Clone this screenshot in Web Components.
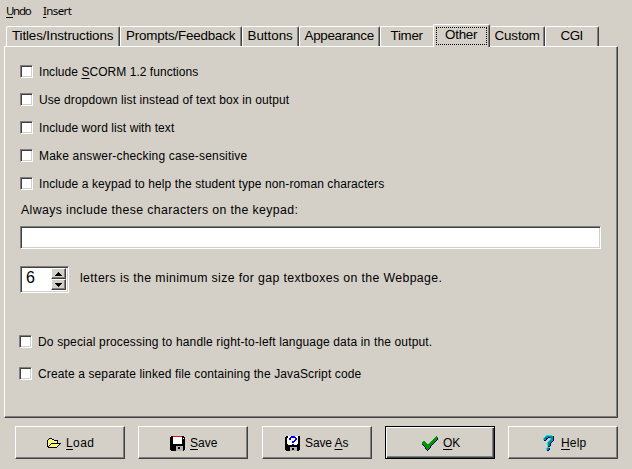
<!DOCTYPE html>
<html lang="en">
<head>
<meta charset="utf-8">
<title>Configure Output</title>
<style>
html,body{margin:0;height:100%;background:#d4d0c8;overflow:hidden}
body{font-family:"Liberation Sans",Arial,sans-serif;font-size:12px;color:#000}
</style>
</head>
<body>
<config-window></config-window>
<script>
// Text stretched by letter spacing to a given width; "_" marks the accelerator key.
customElements.define('fit-text', class extends HTMLElement {
  connectedCallback() {
    const root = this.attachShadow({mode: 'open'});
    const html = this.getAttribute('text').replace(/_(.)/, '<u>$1</u>');
    root.innerHTML = `<style>:host{display:block;white-space:nowrap;line-height:16px;height:16px}
      u{text-decoration:underline;text-decoration-thickness:1px;text-underline-offset:2px}</style><span>${html}</span>`;
    const span = root.querySelector('span'), w = +this.getAttribute('w');
    if (w) {
      const n = span.textContent.length;
      span.style.letterSpacing = (w + .3 - span.getBoundingClientRect().width) / n + 'px';
      this.style.width = w + 1 + 'px';
    }
  }
});

const ICONS = {
  folder: [
    '..kkk.........',
    '.kywykk.......',
    'kywywywkkkk...',
    'kwywywywywk...',
    'kywywywywyk...',
    'kwywkkkkkkkkkk',
    'kywkywywywywk.',
    'kwkywywywywk..',
    'kkywywywywk...',
    '.kkkkkkkkk....'],
  floppy: [
    '.kkrrrrrrrrrkk.',
    'kkkwwwwwwwwwkkk',
    'kkkwwwwwwwwwkwk',
    'kkkwwwwwwwwwkkk',
    'kkkwwwwwwwwwkkk',
    'kkkwwwwwwwwwkkk',
    'kkkwwwwwwwwwkkk',
    'kkkwwwwwwwwwkkk',
    'kkkkkkkkkkkkkkk',
    'kkkkkkkkkkkkkkk',
    'kkkkkkgggggggkk',
    'kkkkkkggkkgggkk',
    'kkkkkkggkkgggkk',
    'kkkkkkgggggggkk',
    '.kkkkkgggggggk.'],
  floppyAsk: [
    '.kkwwwbbbbwwwkk',
    'kkkwwbbbbbbwwkk',
    'kkwwbbwwwwbbwkk',
    'kkwwbbwwwwbbwkk',
    'kkwwwwwwwbbwwkk',
    'kkwwwwwbbbwwwkk',
    'kkwwwwwbbwwwwkk',
    'kkwwwwwwwwwwwkk',
    'kkkwwwwbbwwwkkk',
    'kkkkkkkkkkkkkkk',
    'kkkkkkkkkkkkkkk',
    'kkkkkgggggggkkk',
    'kkkkkggkkgggkkk',
    'kkkkkggkkgggkkk',
    '.kkkkgggggggkk.'],
  check: [
    '..............G.',
    '.............GGG',
    '............GGGn',
    '...........GGGGn',
    '..........GGGGn.',
    '.GG......GGGGn..',
    'GGGG....GGGGn...',
    'GGGGG..GGGGn....',
    'nGGGGGGGGGn.....',
    '.nGGGGGGGn......',
    '..nGGGGGn.......',
    '...nGGGGn.......',
    '...nGGGn........',
    '....nGn.........',
    '.....n..........'],
  help: [
    '...cccccc..',
    '..ctttttttn',
    '.ctttnntttn',
    'cttnn..cttn',
    'cttn...cttn',
    '.nn...ctttn',
    '.....ctttn.',
    '....ctttn..',
    '....cttn...',
    '....cttn...',
    '....cttn...',
    '.....nn....',
    '....cc.....',
    '...cttn....',
    '...cttn....',
    '....nn.....']
};
const INK = {k:'#000',w:'#fff',y:'#ffff00',r:'#f00',g:'#b4b4b4',b:'#0000ff',G:'#009800',n:'#000070',c:'#00e0e0',t:'#009090'};
customElements.define('pixel-icon', class extends HTMLElement {
  connectedCallback() {
    const rows = ICONS[this.getAttribute('name')];
    let rects = '';
    rows.forEach((row, y) => [...row].forEach((c, x) => {
      if (c !== '.') rects += `<rect x="${x}" y="${y}" width="1" height="1" fill="${INK[c]}"/>`;
    }));
    this.attachShadow({mode: 'open'}).innerHTML = `<style>:host{display:block;flex:none}svg{display:block}</style>
      <svg width="${rows[0].length}" height="${rows.length}" shape-rendering="crispEdges">${rects}</svg>`;
  }
});

customElements.define('menu-bar', class extends HTMLElement {
  connectedCallback() {
    this.attachShadow({mode: 'open'}).innerHTML = `<style>
      :host{display:flex;gap:12px;padding:3px 0 0 6px;height:20px;box-sizing:border-box;font-family:"Noto Sans",sans-serif;font-size:11.5px}</style>
      <fit-text text="_Undo" w="24"></fit-text><fit-text text="_Insert" w="28"></fit-text>`;
  }
});

customElements.define('tab-item', class extends HTMLElement {
  connectedCallback() {
    this.attachShadow({mode: 'open'}).innerHTML = `<style>
      :host{display:flex;justify-content:center;box-sizing:border-box;flex:none;height:20px;padding-top:1px;font-size:13.4px;
        border-top:1px solid #fff;border-left:1px solid #fff;border-right:1px solid #404040;
        box-shadow:inset -1px 0 #808080;border-radius:2px 2px 0 0;background:#d4d0c8}
      :host([selected]){height:23px;margin-bottom:-1px;padding:2px 2px 0;z-index:1}
      :host([under]){border-right:0;box-shadow:none;border-top-right-radius:0}
      div{display:flex;justify-content:center}
      :host([selected]) div{outline:1px dotted #000;outline-offset:-1px;width:100%;height:18px}
      </style><div><slot></slot></div>`;
  }
});

customElements.define('check-row', class extends HTMLElement {
  connectedCallback() {
    this.attachShadow({mode: 'open'}).innerHTML = `<style>
      :host{display:flex;align-items:flex-start;gap:6px;height:16px}
      i{width:13px;height:13px;margin-top:1px;box-sizing:border-box;background:#fff;border:1px solid;border-color:#808080 #fff #fff #808080;
        box-shadow:inset 1px 1px #404040,inset -1px -1px #d4d0c8}</style>
      <i></i><slot></slot>`;
  }
});

customElements.define('sunken-field', class extends HTMLElement {
  connectedCallback() {
    this.attachShadow({mode: 'open'}).innerHTML = `<style>
      :host{display:flex;box-sizing:border-box;background:#fff;border:1px solid;border-color:#808080 #fff #fff #808080;
        box-shadow:inset 1px 1px #404040,inset -1px -1px #d4d0c8;padding:1px}</style><slot></slot>`;
  }
});

customElements.define('spin-arrows', class extends HTMLElement {
  connectedCallback() {
    this.attachShadow({mode: 'open'}).innerHTML = `<style>
      :host{display:flex;flex-direction:column;width:15px;margin:0 1px 0 auto}
      b{display:flex;align-items:center;justify-content:center;height:11px;box-sizing:border-box;background:#d4d0c8;
        border:1px solid;border-color:#fff #404040 #404040 #fff;box-shadow:inset -1px -1px #808080}
      svg{display:block}</style>
      <b><svg width="7" height="4" shape-rendering="crispEdges"><path d="M3 0h1v1h1v1h1v1h1v1H0V3h1V2h1V1h1z"/></svg></b>
      <b><svg width="7" height="4" shape-rendering="crispEdges"><path d="M0 0h7v1H6v1H5v1H4v1H3V3H2V2H1V1H0z"/></svg></b>`;
  }
});

customElements.define('push-button', class extends HTMLElement {
  connectedCallback() {
    this.attachShadow({mode: 'open'}).innerHTML = `<style>
      :host{display:flex;align-items:center;box-sizing:border-box;width:110px;height:33px;padding-top:1px;font-size:12px;
        border:1px solid;border-color:#fff #404040 #404040 #fff;box-shadow:inset -1px -1px #808080}
      :host([default]){border-color:#000;box-shadow:inset 1px 1px #fff,inset -1px -1px #404040,inset -2px -2px #808080}
      </style><slot></slot>`;
  }
});

customElements.define('config-window', class extends HTMLElement {
  connectedCallback() {
    this.attachShadow({mode: 'open'}).innerHTML = `<style>
      :host{display:flex;flex-direction:column;width:632px;height:469px;background:#d4d0c8}
      .tabs{display:flex;align-items:flex-end;height:26px;padding-left:6px}
      .panel{height:372px;width:614px;margin-left:4px;box-sizing:border-box;border:1px solid;border-color:#fff #404040 #404040 #fff;
        box-shadow:inset -1px -1px #808080;padding:17px 0 0 15px;display:flex;flex-direction:column}
      .checks{display:flex;flex-direction:column;gap:12px}
      .spin{display:flex;align-items:center;gap:11px;margin-top:17px;font-size:12.3px}
      .low{display:flex;flex-direction:column;gap:16px;margin:41px 0 0 -1px}
      .buttons{display:flex;padding:8px 0 0 15px}
    </style>
    <menu-bar></menu-bar>
    <div class="tabs">
      <tab-item style="width:114px"><fit-text text="Titles/Instructions" w="101"></fit-text></tab-item>
      <tab-item style="width:122px"><fit-text text="Prompts/Feedback" w="109"></fit-text></tab-item>
      <tab-item style="width:57px"><fit-text text="Buttons" w="45"></fit-text></tab-item>
      <tab-item style="width:81px"><fit-text text="Appearance" w="69"></fit-text></tab-item>
      <tab-item under style="width:53px"><fit-text text="Timer" w="32"></fit-text></tab-item>
      <tab-item selected style="width:57px"><fit-text text="Other" w="32"></fit-text></tab-item>
      <tab-item style="width:55px;border-left-color:#d4d0c8"><fit-text text="Custom" w="45"></fit-text></tab-item>
      <tab-item style="width:54px"><fit-text text="CGI" w="22"></fit-text></tab-item>
    </div>
    <div class="panel">
      <div class="checks">
        <check-row><fit-text text="Include _SCORM 1.2 functions" w="159"></fit-text></check-row>
        <check-row><fit-text text="Use dropdown list instead of text box in output" w="250"></fit-text></check-row>
        <check-row><fit-text text="Include word list with text" w="135"></fit-text></check-row>
        <check-row><fit-text text="Make answer-checking case-sensitive" w="208"></fit-text></check-row>
        <check-row><fit-text text="Include a keypad to help the student type non-roman characters" w="345"></fit-text></check-row>
      </div>
      <fit-text style="margin:10px 0 0 1px;font-size:12.3px" text="Always include these characters on the keypad:" w="277"></fit-text>
      <sunken-field style="width:581px;height:23px;margin-top:8px"></sunken-field>
      <div class="spin">
        <sunken-field style="width:49px;height:27px"><fit-text style="font-size:16px;margin:2px 0 0 4px" text="6"></fit-text><spin-arrows></spin-arrows></sunken-field>
        <fit-text style="margin-top:-3px" text="letters is the minimum size for gap textboxes on the Webpage." w="362"></fit-text>
      </div>
      <div class="low">
        <check-row><fit-text text="Do special processing to handle right-to-left language data in the output." w="394"></fit-text></check-row>
        <check-row><fit-text text="Create a separate linked file containing the JavaScript code" w="323"></fit-text></check-row>
      </div>
    </div>
    <div class="buttons">
      <push-button><pixel-icon name="folder" style="margin:0 5px 0 31px"></pixel-icon><fit-text text="_Load" w="28"></fit-text></push-button>
      <push-button style="margin-left:13px"><pixel-icon name="floppy" style="margin:0 5px 0 31px"></pixel-icon><fit-text text="_Save" w="27"></fit-text></push-button>
      <push-button style="margin-left:14px"><pixel-icon name="floppyAsk" style="margin:0 5px 0 22px"></pixel-icon><fit-text text="Save _As" w="43"></fit-text></push-button>
      <push-button default style="margin-left:13px"><pixel-icon name="check" style="margin:0 5px 0 36px"></pixel-icon><fit-text text="_OK" w="17"></fit-text></push-button>
      <push-button style="margin-left:13px"><pixel-icon name="help" style="margin:0 7px 0 34px"></pixel-icon><fit-text text="_Help" w="25"></fit-text></push-button>
    </div>`;
  }
});
</script>
</body>
</html>
